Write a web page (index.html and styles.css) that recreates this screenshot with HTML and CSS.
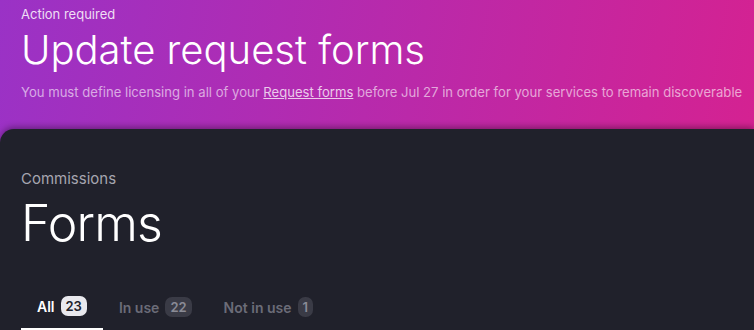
FILE: index.html
```html
<!DOCTYPE html>
<html lang="en">
<head>
    <meta charset="UTF-8">
    <meta name="viewport" content="width=device-width, initial-scale=1.0">
    <title>Forms</title>
    <link rel="stylesheet" href="styles.css">
</head>
<body>

    <div class="banner">
        <div class="banner-label">Action required</div>
        <h1 class="banner-title">Update request forms</h1>
        <p class="banner-text">You must define licensing in all of your <a href="#">Request forms</a> before Jul 27 in order for your services to remain discoverable</p>
    </div>

    <div class="panel">
        <div class="crumb">Commissions</div>
        <h2 class="page-title">Forms</h2>

        <div class="tabs">
            <div class="tab active">All <span class="badge">23</span></div>
            <div class="tab">In use <span class="badge">22</span></div>
            <div class="tab">Not in use <span class="badge">1</span></div>
        </div>
    </div>

</body>
</html>
```

FILE: styles.css
```css
body {
    margin: 0;
    padding: 0;
    font-family: Inter, "Noto Sans", sans-serif;
    background: linear-gradient(100deg, #9a32c6, #d7218f);
    overflow: hidden;
}
.banner {
    padding: 6px 21px 0 21px;
    height: 123px;
    color: white;
    box-sizing: border-box;
}
.banner-label {
    font-size: 13px;
    color: rgba(255, 255, 255, 0.85);
}
.banner-title {
    margin: 4px 0 0 0;
    font-size: 40px;
    font-weight: 300;
    line-height: 48px;
}
.banner-text {
    margin: 10px 0 0 0;
    font-size: 13.1px;
    color: rgba(255, 255, 255, 0.6);
    white-space: nowrap;
}
.banner-text a {
    color: rgba(255, 255, 255, 0.75);
}
.panel {
    background: #20212b;
    margin-top: 6px;
    border-radius: 14px 0 0 0;
    height: 161px;
    padding: 40px 21px 0 21px;
    box-shadow: 0 -2px 6px rgba(0, 0, 0, 0.35);
}
.crumb {
    font-size: 15px;
    color: #a6a6b0;
}
.page-title {
    margin: 4px 0 0 0;
    font-size: 50px;
    font-weight: 300;
    color: white;
    line-height: 62px;
    letter-spacing: -0.8px;
}
.tabs {
    display: flex;
    margin-top: 36px;
}
.tab {
    font-size: 14px;
    font-weight: 600;
    color: #6b6c78;
    padding: 6px 16px 12px 16px;
    display: flex;
    align-items: center;
    gap: 6px;
}
.tab.active {
    color: white;
    border-bottom: 2px solid white;
}
.badge {
    background: #3a3b46;
    color: #8a8b96;
    font-size: 13px;
    padding: 2px 5px;
    border-radius: 7px;
}
.tab.active .badge {
    background: #e9e9ee;
    color: #20212b;
}
```
